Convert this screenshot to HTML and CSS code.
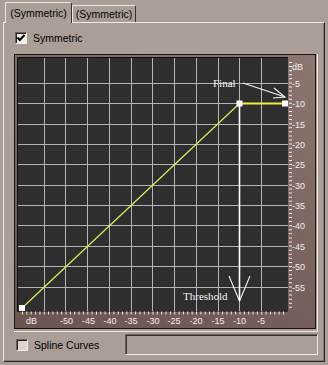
FILE: index.html
```html
<!DOCTYPE html>
<html lang="en">
<head>
    <meta charset="UTF-8">
    <title>Symmetric</title>
    <link rel="stylesheet" href="styles.css">
</head>
<body>
    <div class="tabs">
        <div class="tab active">(Symmetric)</div>
        <div class="tab">(Symmetric)</div>
    </div>
    <div class="panel">
        <div class="check-row">
            <span class="checkbox checked">
                <svg width="10" height="10" viewBox="0 0 10 10"><polyline points="1.5,4.5 3.8,7 8.5,2" fill="none" stroke="#000" stroke-width="2"/></svg>
            </span>
            <span>Symmetric</span>
        </div>
        <div class="graph-frame">
            <div class="graph">
                <svg class="plot" width="300" height="273" viewBox="15 55 300 273">
                    <rect class="area" x="17" y="57" width="271" height="255"/>
                    <line class="edge" x1="17.5" y1="57" x2="17.5" y2="312"/>
                    <line class="edge" x1="17" y1="57.5" x2="288" y2="57.5"/>
                    <g class="grid">
                        <line x1="44.5" y1="58" x2="44.5" y2="311"/>
                        <line x1="65.5" y1="58" x2="65.5" y2="311"/>
                        <line x1="87.5" y1="58" x2="87.5" y2="311"/>
                        <line x1="109.5" y1="58" x2="109.5" y2="311"/>
                        <line x1="131.5" y1="58" x2="131.5" y2="311"/>
                        <line x1="152.5" y1="58" x2="152.5" y2="311"/>
                        <line x1="174.5" y1="58" x2="174.5" y2="311"/>
                        <line x1="196.5" y1="58" x2="196.5" y2="311"/>
                        <line x1="218.5" y1="58" x2="218.5" y2="311"/>
                        <line x1="239.5" y1="58" x2="239.5" y2="311"/>
                        <line x1="261.5" y1="58" x2="261.5" y2="311"/>
                        <line x1="18" y1="83.5" x2="288" y2="83.5"/>
                        <line x1="18" y1="103.5" x2="288" y2="103.5"/>
                        <line x1="18" y1="124.5" x2="288" y2="124.5"/>
                        <line x1="18" y1="144.5" x2="288" y2="144.5"/>
                        <line x1="18" y1="164.5" x2="288" y2="164.5"/>
                        <line x1="18" y1="185.5" x2="288" y2="185.5"/>
                        <line x1="18" y1="205.5" x2="288" y2="205.5"/>
                        <line x1="18" y1="225.5" x2="288" y2="225.5"/>
                        <line x1="18" y1="246.5" x2="288" y2="246.5"/>
                        <line x1="18" y1="266.5" x2="288" y2="266.5"/>
                        <line x1="18" y1="287.5" x2="288" y2="287.5"/>
                    </g>
                    <line class="ticks" x1="22" y1="313" x2="285" y2="313" stroke-dasharray="1 3.35"/>
                    <line class="ticks" x1="290.5" y1="62" x2="290.5" y2="309" stroke-dasharray="1 3.08"/>
                    <g class="ylabels">
                        <text x="292" y="70">dB</text>
                        <text x="292" y="86.5">-5</text>
                        <text x="292" y="106.5">-10</text>
                        <text x="292" y="127.5">-15</text>
                        <text x="292" y="147.5">-20</text>
                        <text x="292" y="167.5">-25</text>
                        <text x="292" y="188.5">-30</text>
                        <text x="292" y="208.5">-35</text>
                        <text x="292" y="228.5">-40</text>
                        <text x="292" y="249.5">-45</text>
                        <text x="292" y="269.5">-50</text>
                        <text x="292" y="290.5">-55</text>
                    </g>
                    <g class="xlabels">
                        <text x="26" y="323.5" class="start">dB</text>
                        <text x="66.5" y="323.5">-50</text>
                        <text x="88.5" y="323.5">-45</text>
                        <text x="110" y="323.5">-40</text>
                        <text x="131" y="323.5">-35</text>
                        <text x="153" y="323.5">-30</text>
                        <text x="174" y="323.5">-25</text>
                        <text x="196" y="323.5">-20</text>
                        <text x="218" y="323.5">-15</text>
                        <text x="239.5" y="323.5">-10</text>
                        <text x="261" y="323.5">-5</text>
                    </g>
                    <line class="curve" x1="22" y1="308" x2="239.5" y2="103.5"/>
                    <line class="curve flat" x1="239.5" y1="103.5" x2="285" y2="103.5"/>
                    <g class="arrow">
                        <line class="thresh" x1="239.5" y1="104" x2="239.5" y2="301"/>
                        <polyline points="229,276 239.5,301 250,276"/>
                        <line x1="243" y1="83" x2="285" y2="97"/>
                        <polyline points="274,88 285,97 273,98"/>
                    </g>
                    <text class="note" x="213" y="87">Final</text>
                    <text class="note" x="183" y="300">Threshold</text>
                    <rect class="knob" x="19" y="305" width="6" height="6"/>
                    <rect class="knob" x="236.5" y="100.5" width="6" height="6"/>
                    <rect class="knob" x="282" y="100.5" width="6" height="6"/>
                </svg>
            </div>
        </div>
        <div class="bottom-row">
            <span class="checkbox off"></span>
            <span>Spline Curves</span>
            <div class="textbox"></div>
        </div>
    </div>
</body>
</html>
```

FILE: styles.css
```css
body {
    margin: 0;
    width: 328px;
    height: 365px;
    overflow: hidden;
    background-color: #ab9e97;
    font-family: "Liberation Sans", Arial, sans-serif;
    font-size: 10.5px;
    color: #000;
}
.tabs {
    display: flex;
    align-items: flex-end;
    height: 23px;
    margin-bottom: -1px;
    padding-left: 5px;
    position: relative;
    z-index: 1;
}
.tab {
    box-sizing: border-box;
    width: 64px;
    height: 17px;
    margin-bottom: 1px;
    border-top: 1px solid #efe6e1;
    border-left: 1px solid #efe6e1;
    border-right: 1px solid #3a302c;
    border-radius: 2px 2px 0 0;
    background-color: #ab9e97;
    text-align: center;
    line-height: 16px;
}
.tab.active {
    width: 67px;
    height: 21px;
    margin-bottom: 0;
    line-height: 20px;
}
.panel {
    box-sizing: border-box;
    width: 322px;
    height: 340px;
    margin-left: 3px;
    border-top: 1px solid #f2eae6;
    border-left: 1px solid #f2eae6;
    border-right: 1px solid #2e2622;
    border-bottom: 1px solid #2e2622;
    box-shadow: inset -1px -1px 0 #85786f;
}
.check-row {
    display: flex;
    align-items: center;
    gap: 6px;
    height: 12px;
    margin-top: 9px;
    padding-left: 11px;
}
.checkbox {
    box-sizing: border-box;
    display: flex;
    align-items: center;
    justify-content: center;
    width: 12px;
    height: 12px;
    border: 1px solid;
    border-color: #6c605a #f2eae6 #f2eae6 #6c605a;
    box-shadow: inset 1px 1px 0 #2a221e;
}
.checkbox.checked {
    background-color: #f4f0ec;
}
.checkbox.off {
    background-color: #dcd4cf;
}
.graph-frame {
    width: 302px;
    margin: 10px 0 0 10px;
    padding: 0 1px 2px 0;
    border-right: 1px solid #f0e8e4;
    border-bottom: 1px solid #f0e8e4;
}
.graph {
    width: 300px;
    height: 273px;
    border: 1px solid #1c1412;
    background: linear-gradient(200deg, #8c7670, #6a5550);
}
.plot {
    display: block;
}
.area {
    fill: #2e2e2e;
}
.edge {
    stroke: #120e0e;
    stroke-width: 1;
}
.grid line {
    stroke: #b4b4b4;
    stroke-width: 1;
}
.ticks {
    stroke: #f2eeec;
    stroke-width: 3;
}
.ylabels text,
.xlabels text {
    font-family: "Liberation Sans", Arial, sans-serif;
    font-size: 9px;
    fill: #f2eeec;
}
.xlabels text {
    text-anchor: middle;
}
.xlabels text.start {
    text-anchor: start;
}
.curve {
    stroke: #e4ec5c;
    stroke-width: 1.2;
}
.curve.flat {
    stroke: #eef040;
    stroke-width: 2;
}
.arrow line,
.arrow polyline {
    fill: none;
    stroke: #f4f4f4;
    stroke-width: 1.1;
}
.arrow .thresh {
    stroke: #fff;
    stroke-width: 1.6;
}
.note {
    font-family: "Liberation Serif", "Times New Roman", serif;
    font-size: 11px;
    fill: #f4f4f4;
}
.knob {
    fill: #fff;
}
.bottom-row {
    display: flex;
    align-items: center;
    gap: 6px;
    height: 21px;
    margin-top: 2px;
    padding: 0 6px 0 12px;
}
.textbox {
    box-sizing: border-box;
    width: 193px;
    height: 21px;
    margin-left: auto;
    border: 1px solid;
    border-color: #6c605a #f2eae6 #f2eae6 #6c605a;
    box-shadow: inset 1px 1px 0 #3a302c;
}
```
